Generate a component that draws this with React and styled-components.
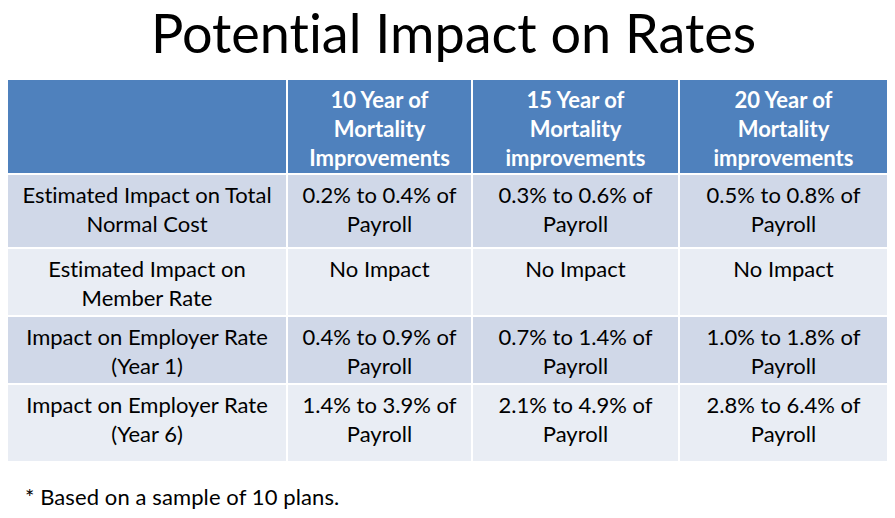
import React from 'react';
import styled, { createGlobalStyle } from 'styled-components';

const GlobalStyle = createGlobalStyle`
  body {
    margin: 0;
    background: #ffffff;
    font-family: Lato, "Open Sans", sans-serif;
    font-variant-ligatures: none;
    color: #000;
  }
`;

const Page = styled.div`
  width: 895px;
  min-height: 518px;
  padding: 0 8px;
  box-sizing: border-box;
`;

const Title = styled.h1`
  margin: 0 0 15px;
  padding-left: 12px;
  font-weight: 400;
  font-size: 54px;
  line-height: 65px;
  text-align: center;
`;

const Table = styled.table`
  width: 879px;
  table-layout: fixed;
  border-collapse: collapse;
  font-size: 22px;
  line-height: 29px;
`;

const Col = styled.col`
  width: ${p => p.$w}px;
`;

const HeadCell = styled.th`
  background: #4f81bd;
  color: #fff;
  font-weight: 700;
  height: 94px;
  padding: 5px 2px 0;
  box-sizing: border-box;
  vertical-align: top;
  text-align: center;
  border: 2px solid #fff;
  border-top: none;
  &:first-child { border-left: none; }
  &:last-child { border-right: none; }
`;

const Cell = styled.td`
  background: ${p => (p.$odd ? '#d0d8e8' : '#e9edf4')};
  height: ${p => p.$h}px;
  padding: 5px 2px 0;
  box-sizing: border-box;
  vertical-align: top;
  text-align: center;
  border: 2px solid #fff;
  &:first-child { border-left: none; }
  &:last-child { border-right: none; }
`;

const Line = styled.span`
  display: block;
  white-space: nowrap;
`;

const Note = styled.p`
  margin: 20px 0 0 17px;
  font-size: 22px;
  letter-spacing: 0.1px;
`;

const widths = [279, 185, 207, 208];

const headers = [
  [],
  ['10 Year of', 'Mortality', 'Improvements'],
  ['15 Year of', 'Mortality', 'improvements'],
  ['20 Year of', 'Mortality', 'improvements'],
];

const rows = [
  { h: 74, cells: [['Estimated Impact on Total', 'Normal Cost'], ['0.2% to 0.4% of', 'Payroll'], ['0.3% to 0.6% of', 'Payroll'], ['0.5% to 0.8% of', 'Payroll']] },
  { h: 68, cells: [['Estimated Impact on', 'Member Rate'], ['No Impact'], ['No Impact'], ['No Impact']] },
  { h: 68, cells: [['Impact on Employer Rate', '(Year 1)'], ['0.4% to 0.9% of', 'Payroll'], ['0.7% to 1.4% of', 'Payroll'], ['1.0% to 1.8% of', 'Payroll']] },
  { h: 78, cells: [['Impact on Employer Rate', '(Year 6)'], ['1.4% to 3.9% of', 'Payroll'], ['2.1% to 4.9% of', 'Payroll'], ['2.8% to 6.4% of', 'Payroll']] },
];

export default function App() {
  return (
    <Page>
      <GlobalStyle />
      <Title>Potential Impact on Rates</Title>
      <Table>
        <colgroup>
          {widths.map((w, i) => <Col key={i} $w={w} />)}
        </colgroup>
        <thead>
          <tr>
            {headers.map((lines, i) => (
              <HeadCell key={i}>
                {lines.map((l, k) => <Line key={k}>{l}</Line>)}
              </HeadCell>
            ))}
          </tr>
        </thead>
        <tbody>
          {rows.map((r, i) => (
            <tr key={i}>
              {r.cells.map((lines, j) => (
                <Cell key={j} $odd={i % 2 === 0} $h={r.h}>
                  {lines.map((l, k) => <Line key={k}>{l}</Line>)}
                </Cell>
              ))}
            </tr>
          ))}
        </tbody>
      </Table>
      <Note>* Based on a sample of 10 plans.</Note>
    </Page>
  );
}
